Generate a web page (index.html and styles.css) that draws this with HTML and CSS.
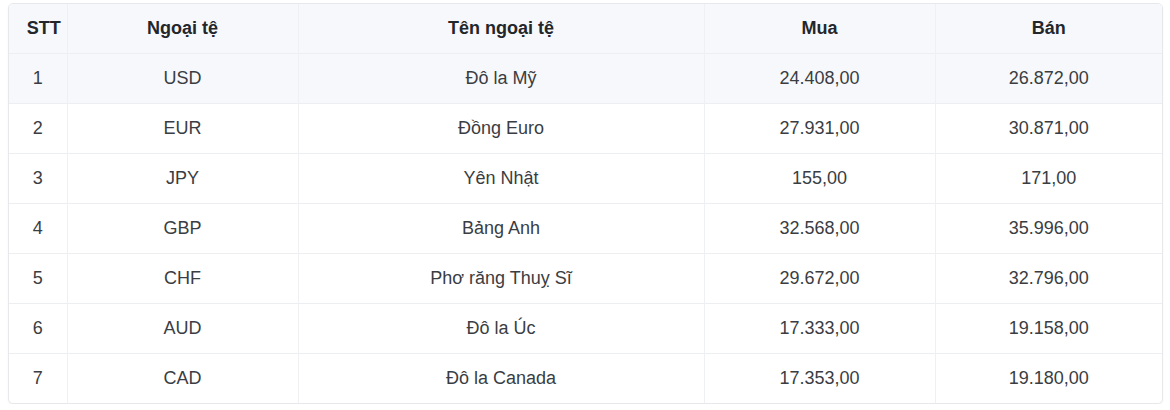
FILE: index.html
```html
<!DOCTYPE html>
<html lang="vi">
<head>
<meta charset="utf-8">
<title>Tỷ giá ngoại tệ</title>
<link rel="stylesheet" href="styles.css">
</head>
<body>
<div class="wrap">
<table class="rates">
<colgroup>
<col class="c-stt"><col class="c-code"><col class="c-name"><col class="c-buy"><col class="c-sell">
</colgroup>
<thead>
<tr><th>STT</th><th>Ngoại tệ</th><th>Tên ngoại tệ</th><th>Mua</th><th>Bán</th></tr>
</thead>
<tbody>
<tr class="hl"><td>1</td><td>USD</td><td>Đô la Mỹ</td><td>24.408,00</td><td>26.872,00</td></tr>
<tr><td>2</td><td>EUR</td><td>Đồng Euro</td><td>27.931,00</td><td>30.871,00</td></tr>
<tr><td>3</td><td>JPY</td><td>Yên Nhật</td><td>155,00</td><td>171,00</td></tr>
<tr><td>4</td><td>GBP</td><td>Bảng Anh</td><td>32.568,00</td><td>35.996,00</td></tr>
<tr><td>5</td><td>CHF</td><td>Phơ răng Thuỵ Sĩ</td><td>29.672,00</td><td>32.796,00</td></tr>
<tr><td>6</td><td>AUD</td><td>Đô la Úc</td><td>17.333,00</td><td>19.158,00</td></tr>
<tr><td>7</td><td>CAD</td><td>Đô la Canada</td><td>17.353,00</td><td>19.180,00</td></tr>
</tbody>
</table>
</div>
</body>
</html>
```
FILE: styles.css
```css
html, body {
  margin: 0;
  padding: 0;
  background: #ffffff;
}
body {
  padding: 3px 7px 0 8px;
  font-family: "Liberation Sans", Arial, sans-serif;
}
.wrap {
  border: 1px solid #e6e8ec;
  border-radius: 5px;
  overflow: hidden;
  box-shadow: 0 1px 2px rgba(0, 0, 0, 0.06);
}
.rates {
  width: 100%;
  border-collapse: collapse;
  table-layout: fixed;
  font-size: 18px;
}
.c-stt { width: 58px; }
.c-code { width: 231px; }
.c-name { width: 406px; }
.c-buy { width: 231px; }
.c-sell { width: auto; }
.rates th,
.rates td {
  height: 49px;
  padding: 0 8px;
  text-align: center;
  vertical-align: middle;
  border-left: 1px solid #eef0f3;
  border-top: 1px solid #eceef2;
}
.rates th:first-child,
.rates td:first-child {
  border-left: none;
}
.rates thead th {
  border-top: none;
  background: #f7f8fb;
  color: #23272b;
  font-weight: bold;
  height: 49px;
}
.rates thead th:first-child {
  padding-left: 14px;
  padding-right: 2px;
}
.rates td {
  color: #3a3d42;
}
.rates tr.hl td {
  background: #f7f8fb;
}
```
